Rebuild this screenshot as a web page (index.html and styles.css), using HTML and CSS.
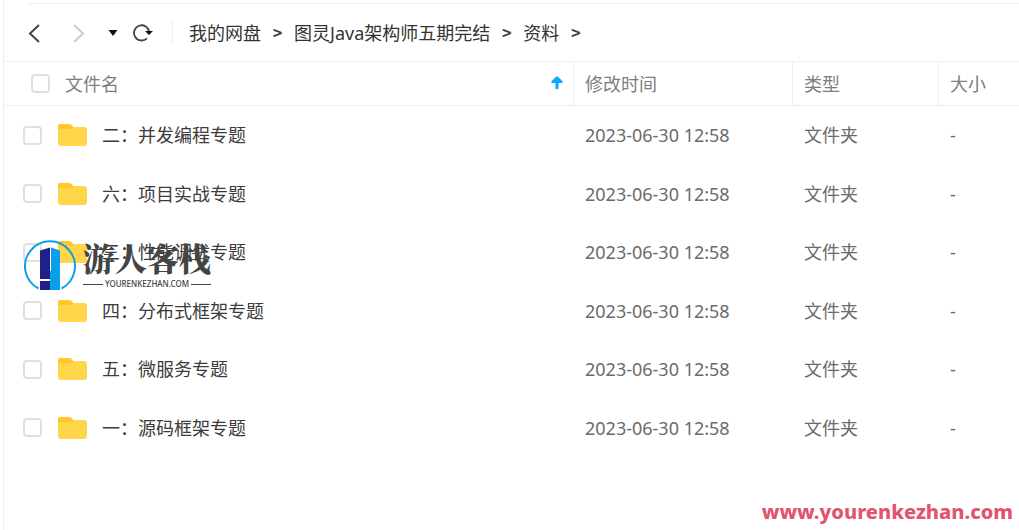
FILE: index.html
```html
<!DOCTYPE html>
<html lang="zh-CN">

<head>
    <meta charset="UTF-8">
    <meta name="viewport" content="width=device-width, initial-scale=1.0">
    <title>我的网盘</title>
    <link rel="stylesheet" href="styles.css">
</head>

<body>
    <main class="explorer">
        <div class="toolbar">
            <button class="tool back" aria-label="后退">
                <svg width="12" height="20" viewBox="0 0 12 20"><path d="M11 2 L2 10.5 L11 19" fill="none" stroke="#444" stroke-width="2"/></svg>
            </button>
            <button class="tool forward" aria-label="前进">
                <svg width="12" height="20" viewBox="0 0 12 20"><path d="M2 2 L11 10.5 L2 19" fill="none" stroke="#ccc" stroke-width="2"/></svg>
            </button>
            <button class="tool history" aria-label="历史">
                <svg width="10" height="8" viewBox="0 0 10 8"><path d="M0.5 1 H9.5 L5 7 Z" fill="#111"/></svg>
            </button>
            <button class="tool refresh" aria-label="刷新">
                <svg width="20" height="18" viewBox="0 0 20 18"><path d="M14 14.3 A7.6 7.6 0 1 1 16.2 8" fill="none" stroke="#444" stroke-width="1.8"/><path d="M12 7 H20 L16 11 Z" fill="#111"/></svg>
            </button>
            <nav class="breadcrumb">
                <a href="#">我的网盘</a>
                <span class="arrow">&gt;</span>
                <a href="#">图灵Java架构师五期完结</a>
                <span class="arrow">&gt;</span>
                <a href="#">资料</a>
                <span class="arrow">&gt;</span>
            </nav>
        </div>

        <table class="files">
            <colgroup>
                <col>
                <col class="col-time">
                <col class="col-type">
                <col class="col-size">
            </colgroup>
            <thead>
                <tr>
                    <th>
                        <div class="head-name">
                            <input type="checkbox" class="check" aria-label="全选">
                            <span>文件名</span>
                            <svg class="sort" width="12" height="16" viewBox="0 0 12 16"><path d="M6 0 L11.5 5 V7 H7.5 V13 H4.5 V7 H0.5 V5 Z" fill="#09aaff"/></svg>
                        </div>
                    </th>
                    <th>修改时间</th>
                    <th>类型</th>
                    <th>大小</th>
                </tr>
            </thead>
            <tbody>
                <tr>
                    <td>
                        <label class="name">
                            <input type="checkbox" class="check">
                            <svg class="folder" width="30" height="24" viewBox="0 0 30 24"><path d="M1 3 Q1 1 3 1 H12 Q14 1 15 2.5 L17 5 V12 H1 Z" fill="#ffc728"/><path d="M1 7 Q1 6 2.5 6 H14 L17 4 H27 Q30 4 30 7 V20 Q30 23 27 23 H4 Q1 23 1 20 Z" fill="#ffd649"/></svg>
                            <span>二：并发编程专题</span>
                        </label>
                    </td>
                    <td>2023-06-30 12:58</td>
                    <td>文件夹</td>
                    <td>-</td>
                </tr>
                <tr>
                    <td>
                        <label class="name">
                            <input type="checkbox" class="check">
                            <svg class="folder" width="30" height="24" viewBox="0 0 30 24"><path d="M1 3 Q1 1 3 1 H12 Q14 1 15 2.5 L17 5 V12 H1 Z" fill="#ffc728"/><path d="M1 7 Q1 6 2.5 6 H14 L17 4 H27 Q30 4 30 7 V20 Q30 23 27 23 H4 Q1 23 1 20 Z" fill="#ffd649"/></svg>
                            <span>六：项目实战专题</span>
                        </label>
                    </td>
                    <td>2023-06-30 12:58</td>
                    <td>文件夹</td>
                    <td>-</td>
                </tr>
                <tr>
                    <td>
                        <label class="name">
                            <input type="checkbox" class="check">
                            <svg class="folder" width="30" height="24" viewBox="0 0 30 24"><path d="M1 3 Q1 1 3 1 H12 Q14 1 15 2.5 L17 5 V12 H1 Z" fill="#ffc728"/><path d="M1 7 Q1 6 2.5 6 H14 L17 4 H27 Q30 4 30 7 V20 Q30 23 27 23 H4 Q1 23 1 20 Z" fill="#ffd649"/></svg>
                            <span>三：性能调优专题</span>
                        </label>
                    </td>
                    <td>2023-06-30 12:58</td>
                    <td>文件夹</td>
                    <td>-</td>
                </tr>
                <tr>
                    <td>
                        <label class="name">
                            <input type="checkbox" class="check">
                            <svg class="folder" width="30" height="24" viewBox="0 0 30 24"><path d="M1 3 Q1 1 3 1 H12 Q14 1 15 2.5 L17 5 V12 H1 Z" fill="#ffc728"/><path d="M1 7 Q1 6 2.5 6 H14 L17 4 H27 Q30 4 30 7 V20 Q30 23 27 23 H4 Q1 23 1 20 Z" fill="#ffd649"/></svg>
                            <span>四：分布式框架专题</span>
                        </label>
                    </td>
                    <td>2023-06-30 12:58</td>
                    <td>文件夹</td>
                    <td>-</td>
                </tr>
                <tr>
                    <td>
                        <label class="name">
                            <input type="checkbox" class="check">
                            <svg class="folder" width="30" height="24" viewBox="0 0 30 24"><path d="M1 3 Q1 1 3 1 H12 Q14 1 15 2.5 L17 5 V12 H1 Z" fill="#ffc728"/><path d="M1 7 Q1 6 2.5 6 H14 L17 4 H27 Q30 4 30 7 V20 Q30 23 27 23 H4 Q1 23 1 20 Z" fill="#ffd649"/></svg>
                            <span>五：微服务专题</span>
                        </label>
                    </td>
                    <td>2023-06-30 12:58</td>
                    <td>文件夹</td>
                    <td>-</td>
                </tr>
                <tr>
                    <td>
                        <label class="name">
                            <input type="checkbox" class="check">
                            <svg class="folder" width="30" height="24" viewBox="0 0 30 24"><path d="M1 3 Q1 1 3 1 H12 Q14 1 15 2.5 L17 5 V12 H1 Z" fill="#ffc728"/><path d="M1 7 Q1 6 2.5 6 H14 L17 4 H27 Q30 4 30 7 V20 Q30 23 27 23 H4 Q1 23 1 20 Z" fill="#ffd649"/></svg>
                            <span>一：源码框架专题</span>
                        </label>
                    </td>
                    <td>2023-06-30 12:58</td>
                    <td>文件夹</td>
                    <td>-</td>
                </tr>
            </tbody>
        </table>
    </main>

    <!-- Marca d'água -->
    <div class="watermark">
        <svg width="54" height="54" viewBox="0 0 54 54">
            <path d="M15.5 49.5 A25 25 0 1 1 38.5 49.5" fill="none" stroke="#0a9fe8" stroke-width="2"/>
            <path d="M17 11.5 L27 8.5 V40 H17 Z M17 42 H27 V51 H17 Z" fill="#1f2089"/>
            <path d="M28 8.5 L37 11.5 V51 H27 V32 H28 Z" fill="#0a9fe8"/>
        </svg>
        <div class="brand">
            <span class="brand-name">游人客栈</span>
            <span class="brand-url">YOURENKEZHAN.COM</span>
        </div>
    </div>
    <div class="site">www.yourenkezhan.com</div>
</body>

</html>
```
FILE: styles.css
```css
* {
    padding: 0;
    margin: 0;
    box-sizing: border-box;
}

body {
    position: relative;
    min-height: 100vh;
    background-color: #fff;
    color: #424242;
    font-family: "Noto Sans", "Noto Sans CJK SC", sans-serif;
    font-size: 18px;
    line-height: 24px;
    overflow-x: hidden;
}

.explorer {
    min-height: 100vh;
    margin-left: 3px;
    padding-top: 3px;
    border-left: 1px solid #eee;
}

/* Barra superior */
.toolbar {
    display: flex;
    align-items: center;
    height: 58px;
    margin-left: 24px;
    border-top: 1px solid #eee;
}

.tool {
    display: flex;
    border: none;
    background: none;
    cursor: pointer;
}

.forward {
    margin-left: 32px;
}

.history {
    margin-left: 24px;
}

.refresh {
    margin: 0 19px 0 15px;
}

.breadcrumb {
    display: flex;
    align-items: center;
    padding-left: 16px;
    border-left: 1px solid #eee;
}

.breadcrumb a {
    color: #333;
    text-decoration: none;
    white-space: nowrap;
}

.arrow {
    width: 33px;
    font-family: "DejaVu Sans Mono", monospace;
    font-size: 16px;
    font-weight: bold;
    text-align: center;
}

/* Lista de arquivos */
.files {
    width: 100%;
    table-layout: fixed;
    border-spacing: 0;
    color: #6b6b6b;
}

.col-time {
    width: 219px;
}

.col-type {
    width: 146px;
}

.col-size {
    width: 81px;
}

.files th {
    height: 45px;
    padding-left: 11px;
    border-top: 1px solid #eee;
    border-bottom: 1px solid #eee;
    border-left: 1px solid #eee;
    color: #7d7d85;
    font-weight: normal;
    text-align: left;
}

.files td {
    height: 58px;
    padding-left: 12px;
}

.files tr:nth-child(even) td {
    height: 59px;
}

.files th:first-child {
    padding-left: 27px;
    border-left: none;
}

.files td:first-child {
    padding-left: 19px;
}

.head-name,
.name {
    display: flex;
    align-items: center;
    gap: 15px;
}

.name {
    color: #3c3c3c;
}

.check {
    appearance: none;
    width: 19px;
    height: 19px;
    border: 2px solid #e0e0e0;
    border-radius: 4px;
    background-color: #fff;
}

.check:checked {
    background-color: #09aaff;
}

.sort {
    margin-left: auto;
    margin-right: 10px;
}

/* Marca d'água */
.watermark {
    position: absolute;
    top: 239px;
    left: 23px;
    display: flex;
    gap: 6px;
    pointer-events: none;
}

.brand {
    display: flex;
    flex-direction: column;
    color: #444;
}

.brand-name {
    font-family: "Noto Serif CJK SC", "Noto Sans CJK SC", serif;
    font-size: 32px;
    font-weight: 900;
    line-height: 36px;
}

.brand-url {
    display: flex;
    align-items: center;
    gap: 2px;
    font-size: 8px;
    font-weight: 500;
    line-height: 18px;
}

.brand-url::before,
.brand-url::after {
    content: "";
    flex: 1;
    border-top: 1px solid #444;
}

.site {
    position: absolute;
    right: 6px;
    bottom: 6px;
    color: #e15470;
    font-family: "Noto Sans", sans-serif;
    font-size: 20px;
    font-weight: 800;
}
```
